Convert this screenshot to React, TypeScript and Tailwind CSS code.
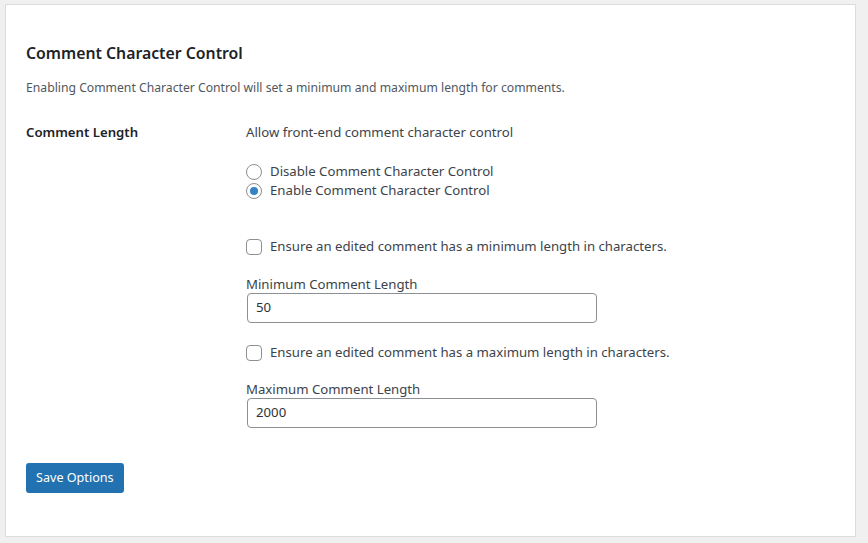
const font = { fontFamily: '"Noto Sans", "Open Sans", sans-serif' };

const Radio = ({ checked, label }: { checked?: boolean; label: string }) => (
  <label className="flex items-center h-[19px]">
    <span className="w-4 h-4 rounded-full border border-[#8c8f94] bg-white flex items-center justify-center shrink-0">
      {checked && <span className="w-2 h-2 rounded-full bg-[#3582c4]" />}
    </span>
    <span className="ml-2 text-[13.2px] text-[#3c434a]">{label}</span>
  </label>
);

const Check = ({ label }: { label: string }) => (
  <label className="flex items-center h-5">
    <span className="w-4 h-4 rounded-[4px] border border-[#8c8f94] bg-white shrink-0" />
    <span className="ml-2 text-[13.2px] text-[#3c434a]">{label}</span>
  </label>
);

const Field = ({ label, value }: { label: string; value: string }) => (
  <div className="flex flex-col">
    <span className="text-[13.2px] text-[#3c434a] leading-4">{label}</span>
    <div className="mt-px ml-px w-[350px] h-[30px] border border-[#8c8f94] rounded-[4px] px-2 flex items-center text-[13.2px] text-[#2c3338]">
      {value}
    </div>
  </div>
);

export default function App() {
  return (
    <div className="w-[868px] h-[543px] bg-[#f0f0f1] pt-1 pl-[5px] pr-3 pb-[6px]" style={font}>
      <div className="h-full bg-white border border-[#dcdcde] pl-5 pr-5 pt-9">
        <h2 className="text-[15.8px] font-semibold text-[#1d2327] leading-6">Comment Character Control</h2>
        <p className="mt-[13px] text-[12.2px] text-[#50575e] leading-5">
          Enabling Comment Character Control will set a minimum and maximum length for comments.
        </p>
        <div className="flex mt-[24px]">
          <div className="w-[220px] text-[13.2px] font-semibold text-[#1d2327] leading-5">Comment Length</div>
          <div className="flex flex-col">
            <div className="text-[13.2px] text-[#3c434a] leading-5">Allow front-end comment character control</div>
            <div className="mt-[20px] flex flex-col">
              <Radio label="Disable Comment Character Control" />
              <Radio checked label="Enable Comment Character Control" />
            </div>
            <div className="mt-[37px]">
              <Check label="Ensure an edited comment has a minimum length in characters." />
            </div>
            <div className="mt-[19px]">
              <Field label="Minimum Comment Length" value="50" />
            </div>
            <div className="mt-[20px]">
              <Check label="Ensure an edited comment has a maximum length in characters." />
            </div>
            <div className="mt-[18px]">
              <Field label="Maximum Comment Length" value="2000" />
            </div>
          </div>
        </div>
        <button className="mt-[35px] h-[30px] px-[10px] bg-[#2271b1] text-white text-[12.6px] rounded-[3px]">
          Save Options
        </button>
      </div>
    </div>
  );
}
